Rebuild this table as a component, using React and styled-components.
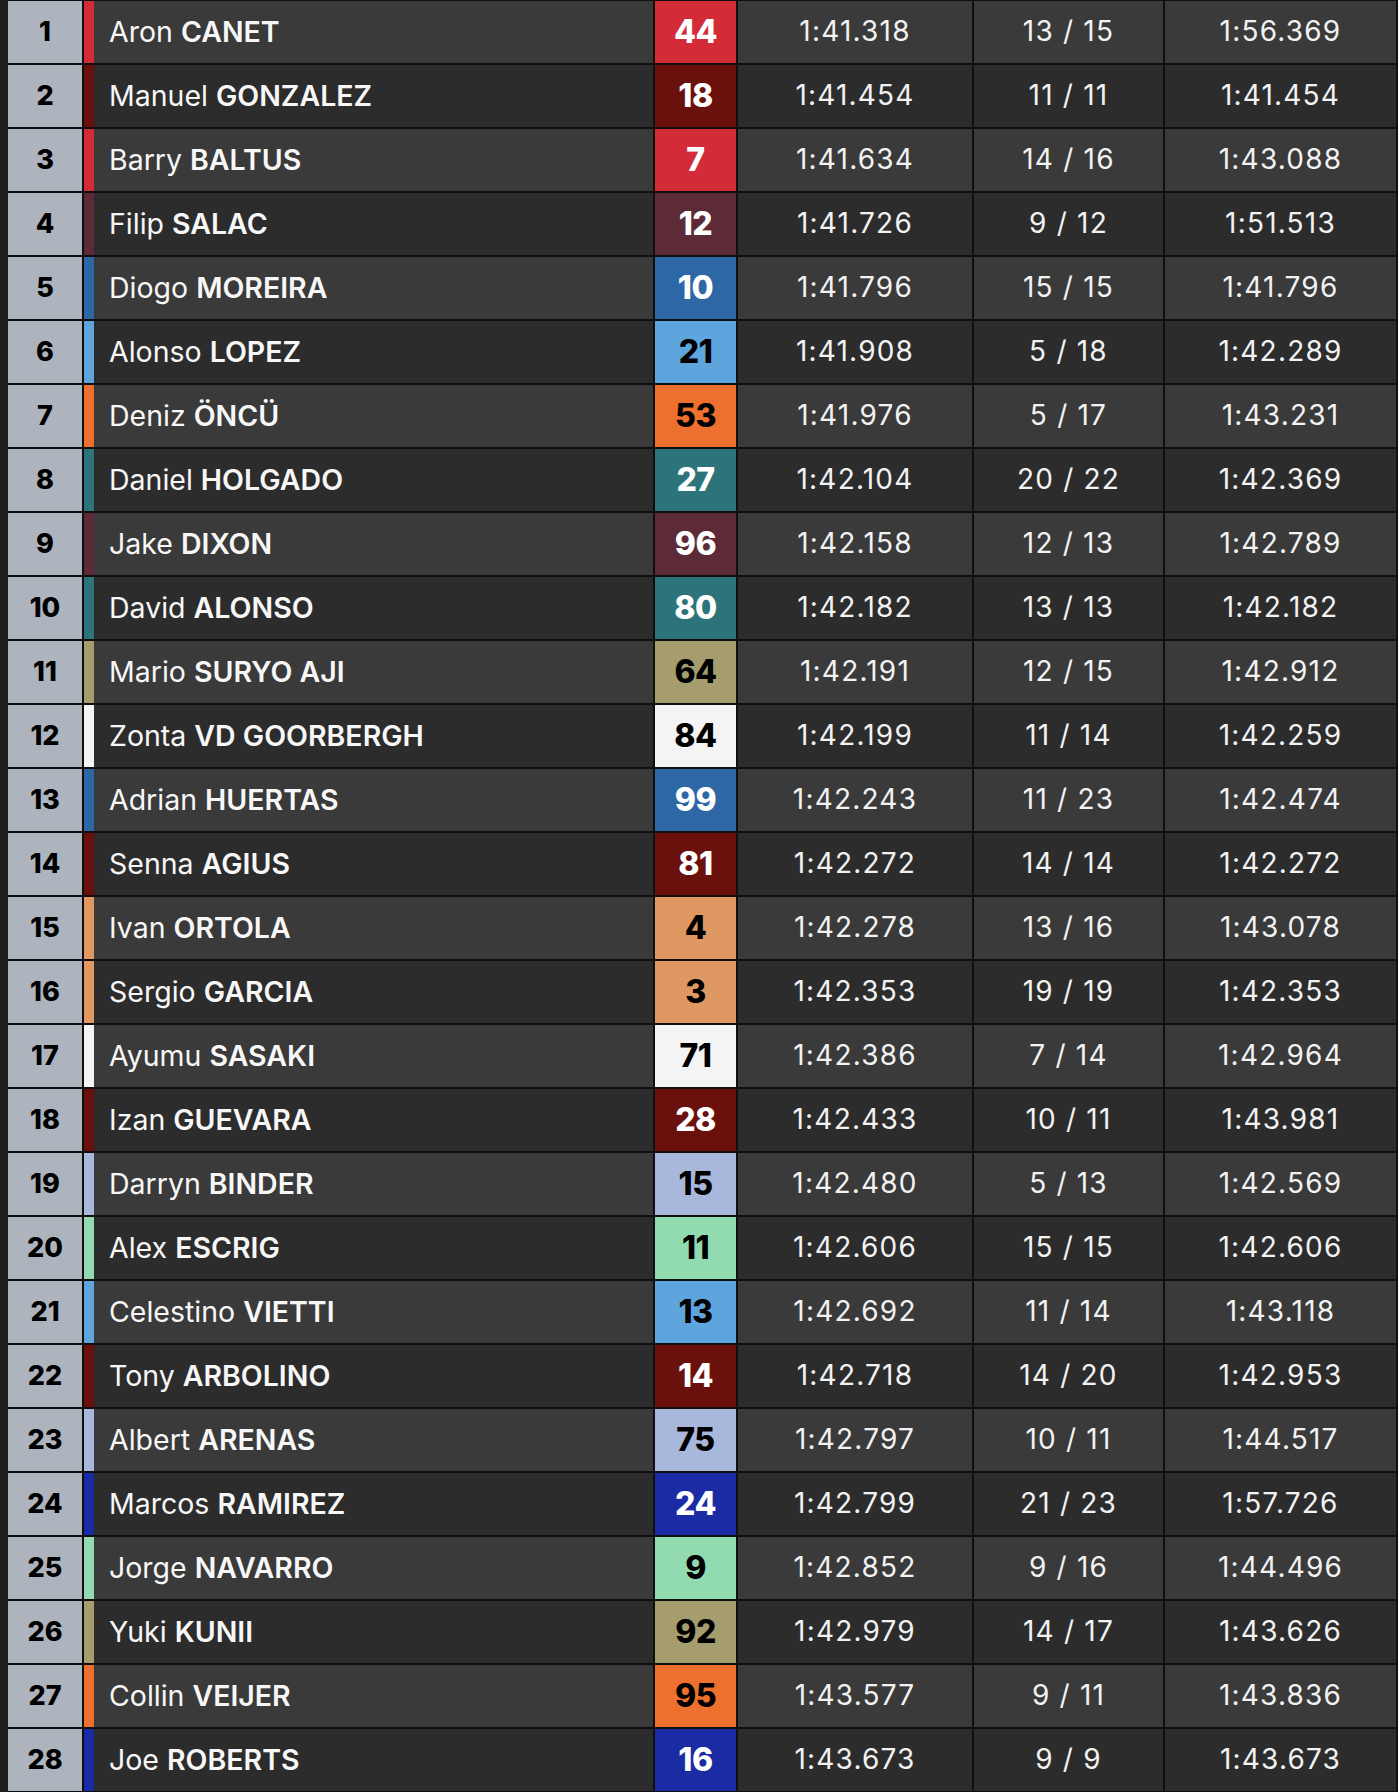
import React from 'react'
import styled, { createGlobalStyle } from 'styled-components';

const GlobalStyle = createGlobalStyle`
  body {
    margin: 0;
    background: #0f0f0f;
  }
`;

const TEAM = {
  red: { bg: '#d32b38', fg: '#fff' },
  darkred: { bg: '#6b110d', fg: '#fff' },
  maroon: { bg: '#5d2b37', fg: '#fff' },
  blue: { bg: '#2e67a6', fg: '#fff' },
  sky: { bg: '#5ea5de', fg: '#000' },
  orange: { bg: '#ee702e', fg: '#000' },
  teal: { bg: '#2c737a', fg: '#fff' },
  khaki: { bg: '#a59d6d', fg: '#000' },
  white: { bg: '#f4f4f4', fg: '#000' },
  tan: { bg: '#e09862', fg: '#000' },
  lavender: { bg: '#a8b7dc', fg: '#000' },
  mint: { bg: '#92dbb1', fg: '#000' },
  royal: { bg: '#1a2ba3', fg: '#fff' },
};

const riders = [
  ['Aron', 'CANET', 44, 'red', '1:41.318', '13 / 15', '1:56.369'],
  ['Manuel', 'GONZALEZ', 18, 'darkred', '1:41.454', '11 / 11', '1:41.454'],
  ['Barry', 'BALTUS', 7, 'red', '1:41.634', '14 / 16', '1:43.088'],
  ['Filip', 'SALAC', 12, 'maroon', '1:41.726', '9 / 12', '1:51.513'],
  ['Diogo', 'MOREIRA', 10, 'blue', '1:41.796', '15 / 15', '1:41.796'],
  ['Alonso', 'LOPEZ', 21, 'sky', '1:41.908', '5 / 18', '1:42.289'],
  ['Deniz', 'ÖNCÜ', 53, 'orange', '1:41.976', '5 / 17', '1:43.231'],
  ['Daniel', 'HOLGADO', 27, 'teal', '1:42.104', '20 / 22', '1:42.369'],
  ['Jake', 'DIXON', 96, 'maroon', '1:42.158', '12 / 13', '1:42.789'],
  ['David', 'ALONSO', 80, 'teal', '1:42.182', '13 / 13', '1:42.182'],
  ['Mario', 'SURYO AJI', 64, 'khaki', '1:42.191', '12 / 15', '1:42.912'],
  ['Zonta', 'VD GOORBERGH', 84, 'white', '1:42.199', '11 / 14', '1:42.259'],
  ['Adrian', 'HUERTAS', 99, 'blue', '1:42.243', '11 / 23', '1:42.474'],
  ['Senna', 'AGIUS', 81, 'darkred', '1:42.272', '14 / 14', '1:42.272'],
  ['Ivan', 'ORTOLA', 4, 'tan', '1:42.278', '13 / 16', '1:43.078'],
  ['Sergio', 'GARCIA', 3, 'tan', '1:42.353', '19 / 19', '1:42.353'],
  ['Ayumu', 'SASAKI', 71, 'white', '1:42.386', '7 / 14', '1:42.964'],
  ['Izan', 'GUEVARA', 28, 'darkred', '1:42.433', '10 / 11', '1:43.981'],
  ['Darryn', 'BINDER', 15, 'lavender', '1:42.480', '5 / 13', '1:42.569'],
  ['Alex', 'ESCRIG', 11, 'mint', '1:42.606', '15 / 15', '1:42.606'],
  ['Celestino', 'VIETTI', 13, 'sky', '1:42.692', '11 / 14', '1:43.118'],
  ['Tony', 'ARBOLINO', 14, 'darkred', '1:42.718', '14 / 20', '1:42.953'],
  ['Albert', 'ARENAS', 75, 'lavender', '1:42.797', '10 / 11', '1:44.517'],
  ['Marcos', 'RAMIREZ', 24, 'royal', '1:42.799', '21 / 23', '1:57.726'],
  ['Jorge', 'NAVARRO', 9, 'mint', '1:42.852', '9 / 16', '1:44.496'],
  ['Yuki', 'KUNII', 92, 'khaki', '1:42.979', '14 / 17', '1:43.626'],
  ['Collin', 'VEIJER', 95, 'orange', '1:43.577', '9 / 11', '1:43.836'],
  ['Joe', 'ROBERTS', 16, 'royal', '1:43.673', '9 / 9', '1:43.673'],
];

const App = () => {
  return (
    <>
      <GlobalStyle />
      <Page>
        <Rail />
        <Board>
          {riders.map(([first, last, num, team, lap, laps, best], i) => (
            <Row key={num}>
              <Pos>{i + 1}</Pos>
              <Name stripe={TEAM[team].bg} odd={i % 2 === 0}>
                {first} <b>{last}</b>
              </Name>
              <Num bg={TEAM[team].bg} fg={TEAM[team].fg}>{num}</Num>
              <Cell odd={i % 2 === 0}>{lap}</Cell>
              <Cell odd={i % 2 === 0}>{laps}</Cell>
              <Cell odd={i % 2 === 0}>{best}</Cell>
            </Row>
          ))}
        </Board>
      </Page>
    </>
  )
}

export default App

const Page = styled.div`
  display: flex;
  width: 1398px;
  height: 1792px;
  background: #0f0f0f;
`;

const Rail = styled.div`
  width: 8px;
  flex-shrink: 0;
  background: #1f1f1f;
`;

const Board = styled.div`
  display: flex;
  flex-direction: column;
  gap: 2px;
  padding: 1px 2px 1px 0;
`;

const Row = styled.div`
  display: grid;
  grid-template-columns: 74px 569px 81px 234px 189px 231px;
  column-gap: 2px;
  height: 62px;
`;

const Pos = styled.div`
  display: flex;
  align-items: center;
  justify-content: center;
  background: #adb4bd;
  color: #000;
  font-family: Inter, "Noto Sans", sans-serif;
  font-weight: 800;
  font-size: 27px;
  padding-bottom: 2px;
`;

const Name = styled.div`
  display: flex;
  align-items: center;
  padding: 0 0 2px 15px;
  border-left: 10px solid ${props => props.stripe};
  background: ${props => props.odd ? '#3a3a3a' : '#2c2c2c'};
  color: #f7f7f7;
  font-family: Inter, "Noto Sans", sans-serif;
  font-size: 28.5px;
  font-weight: 400;
  white-space: pre;

  b {
    font-weight: 600;
  }
`;

const Num = styled.div`
  display: flex;
  align-items: center;
  justify-content: center;
  padding-bottom: 2px;
  background: ${props => props.bg};
  color: ${props => props.fg};
  font-family: Inter, "Noto Sans", sans-serif;
  font-weight: 800;
  font-size: 32px;
  letter-spacing: -0.5px;
`;

const Cell = styled.div`
  display: flex;
  align-items: center;
  justify-content: center;
  padding-bottom: 2px;
  background: ${props => props.odd ? '#3a3a3a' : '#2c2c2c'};
  color: #f2f2f2;
  font-family: Inter, "Noto Sans", sans-serif;
  font-size: 28px;
  font-weight: 400;
  letter-spacing: 1.2px;
`;
